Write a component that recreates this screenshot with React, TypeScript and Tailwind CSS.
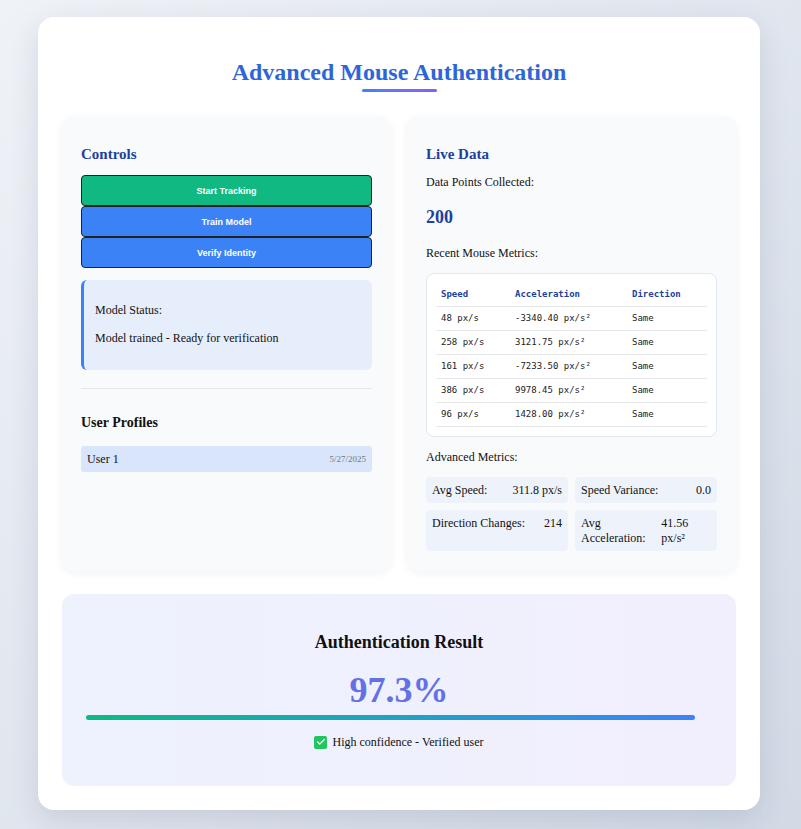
import { Check } from 'lucide-react';

const rows = [
  { speed: '48 px/s', accel: '-3340.40 px/s²', dir: 'Same' },
  { speed: '258 px/s', accel: '3121.75 px/s²', dir: 'Same' },
  { speed: '161 px/s', accel: '-7233.50 px/s²', dir: 'Same' },
  { speed: '386 px/s', accel: '9978.45 px/s²', dir: 'Same' },
  { speed: '96 px/s', accel: '1428.00 px/s²', dir: 'Same' },
];

const metrics = [
  { label: 'Avg Speed:', value: '311.8 px/s' },
  { label: 'Speed Variance:', value: '0.0' },
  { label: 'Direction Changes:', value: '214' },
  { label: 'Avg Acceleration:', value: '41.56 px/s²' },
];

const serif = "font-['Liberation_Serif','Times_New_Roman',serif]";

function ControlButton({ label, color }: { label: string; color: string }) {
  return (
    <button className={`h-[31px] w-full rounded-[4px] border border-[#222] text-[9px] font-bold text-white font-['Liberation_Sans',Arial,sans-serif] ${color}`}>
      {label}
    </button>
  );
}

export default function App() {
  const score = 97.3;
  return (
    <div className={`min-h-[829px] bg-gradient-to-br from-[#eff2f7] to-[#d2dae6] pt-[17px] pb-[19px] pl-[38px] ${serif} text-[12px] leading-[14px] text-[#111]`}>
      <div className="w-[722px] rounded-2xl bg-white px-6 pb-6 shadow-[0_10px_30px_rgba(30,41,70,0.12)]">
        {/* Header */}
        <div className="flex flex-col items-center pt-[41px]">
          <h1 className="text-[24px] font-bold leading-[28px] text-[#2d66d9]">Advanced Mouse Authentication</h1>
          <div className="mt-[3px] h-[3px] w-[75px] rounded-full bg-gradient-to-r from-[#3b82f6] to-[#8b5cf6]" />
        </div>

        <div className="mt-[25px] grid grid-cols-2 gap-4">
          {/* Controls */}
          <div className="rounded-xl bg-[#f8fafc] px-[19px] pt-[29px] pb-5 shadow-[0_2px_8px_rgba(30,41,70,0.06)]">
            <h3 className="text-[15px] font-bold leading-[17px] text-[#213f9c]">Controls</h3>
            <div className="mt-3 flex flex-col">
              <ControlButton label="Start Tracking" color="bg-[#10b981]" />
              <ControlButton label="Train Model" color="bg-[#3b82f6]" />
              <ControlButton label="Verify Identity" color="bg-[#3b82f6]" />
            </div>
            <div className="mt-3 flex flex-col gap-[14px] rounded-md border-l-[3px] border-[#3b82f6] bg-[#e7eefb] pt-[23px] pb-[25px] pl-[11px]">
              <p>Model Status:</p>
              <p>Model trained - Ready for verification</p>
            </div>
            <div className="mt-[18px] h-px bg-[#e2e8f0]" />
            <h4 className="mt-[26px] text-[14px] font-bold leading-[16px]">User Profiles</h4>
            <div className="mt-[15px] flex h-[26px] items-center justify-between rounded-[3px] bg-[#d9e5fb] px-[6px]">
              <span>User 1</span>
              <span className="text-[9px] text-[#777]">5/27/2025</span>
            </div>
          </div>

          {/* Live data */}
          <div className="rounded-xl bg-[#f8fafc] px-[19px] pt-[29px] pb-5 shadow-[0_2px_8px_rgba(30,41,70,0.06)]">
            <h3 className="text-[15px] font-bold leading-[17px] text-[#213f9c]">Live Data</h3>
            <p className="mt-3">Data Points Collected:</p>
            <div className="mt-[18px] text-[18px] font-bold leading-[21px] text-[#213f9c]">200</div>
            <p className="mt-[18px]">Recent Mouse Metrics:</p>
            <div className="mt-[13px] rounded-lg border border-[#e2e8f0] bg-white p-[9px]">
              <table className="w-full border-collapse font-['DejaVu_Sans_Mono',monospace] text-[9px] leading-[11px]">
                <thead>
                  <tr className="border-b border-[#e5e7eb] text-left text-[#213f9c]">
                    <th className="w-[74px] px-[5px] py-[6px] font-bold">Speed</th>
                    <th className="w-[117px] px-[5px] py-[6px] font-bold">Acceleration</th>
                    <th className="px-[5px] py-[6px] font-bold">Direction</th>
                  </tr>
                </thead>
                <tbody className="text-[#222]">
                  {rows.map((r, i) => (
                    <tr key={i} className="border-b border-[#e5e7eb]">
                      <td className="px-[5px] py-[6px]">{r.speed}</td>
                      <td className="px-[5px] py-[6px]">{r.accel}</td>
                      <td className="px-[5px] py-[6px]">{r.dir}</td>
                    </tr>
                  ))}
                </tbody>
              </table>
            </div>
            <p className="mt-[13px]">Advanced Metrics:</p>
            <div className="mt-[13px] grid grid-cols-2 gap-[7px]">
              {metrics.map(m => (
                <div key={m.label} className="flex justify-between rounded-[4px] bg-[#eef3fb] px-[6px] pt-[6px] pb-[5px] leading-[15px]">
                  <span>{m.label}</span>
                  <span>{m.value}</span>
                </div>
              ))}
            </div>
          </div>
        </div>

        {/* Result */}
        <div className="mt-[23px] flex flex-col items-center rounded-xl bg-gradient-to-r from-[#edf2fd] to-[#f2effd] px-6 pt-[38px] pb-[37px]">
          <h3 className="text-[18px] font-bold leading-[21px]">Authentication Result</h3>
          <div className="mt-[17px] text-[36px] font-bold leading-[41px] text-[#6470e6]">{score}%</div>
          <div className="mt-[4px] h-[5px] w-full rounded-full">
            <div className="h-full rounded-full bg-gradient-to-r from-[#10b981] to-[#3b82f6]" style={{ width: `${score}%` }} />
          </div>
          <div className="mt-[15px] flex items-center gap-[5px]">
            <span className="flex h-[13px] w-[13px] items-center justify-center rounded-[2px] bg-[#22c55e]">
              <Check size={10} strokeWidth={3} className="text-white" />
            </span>
            <span>High confidence - Verified user</span>
          </div>
        </div>
      </div>
    </div>
  );
}
